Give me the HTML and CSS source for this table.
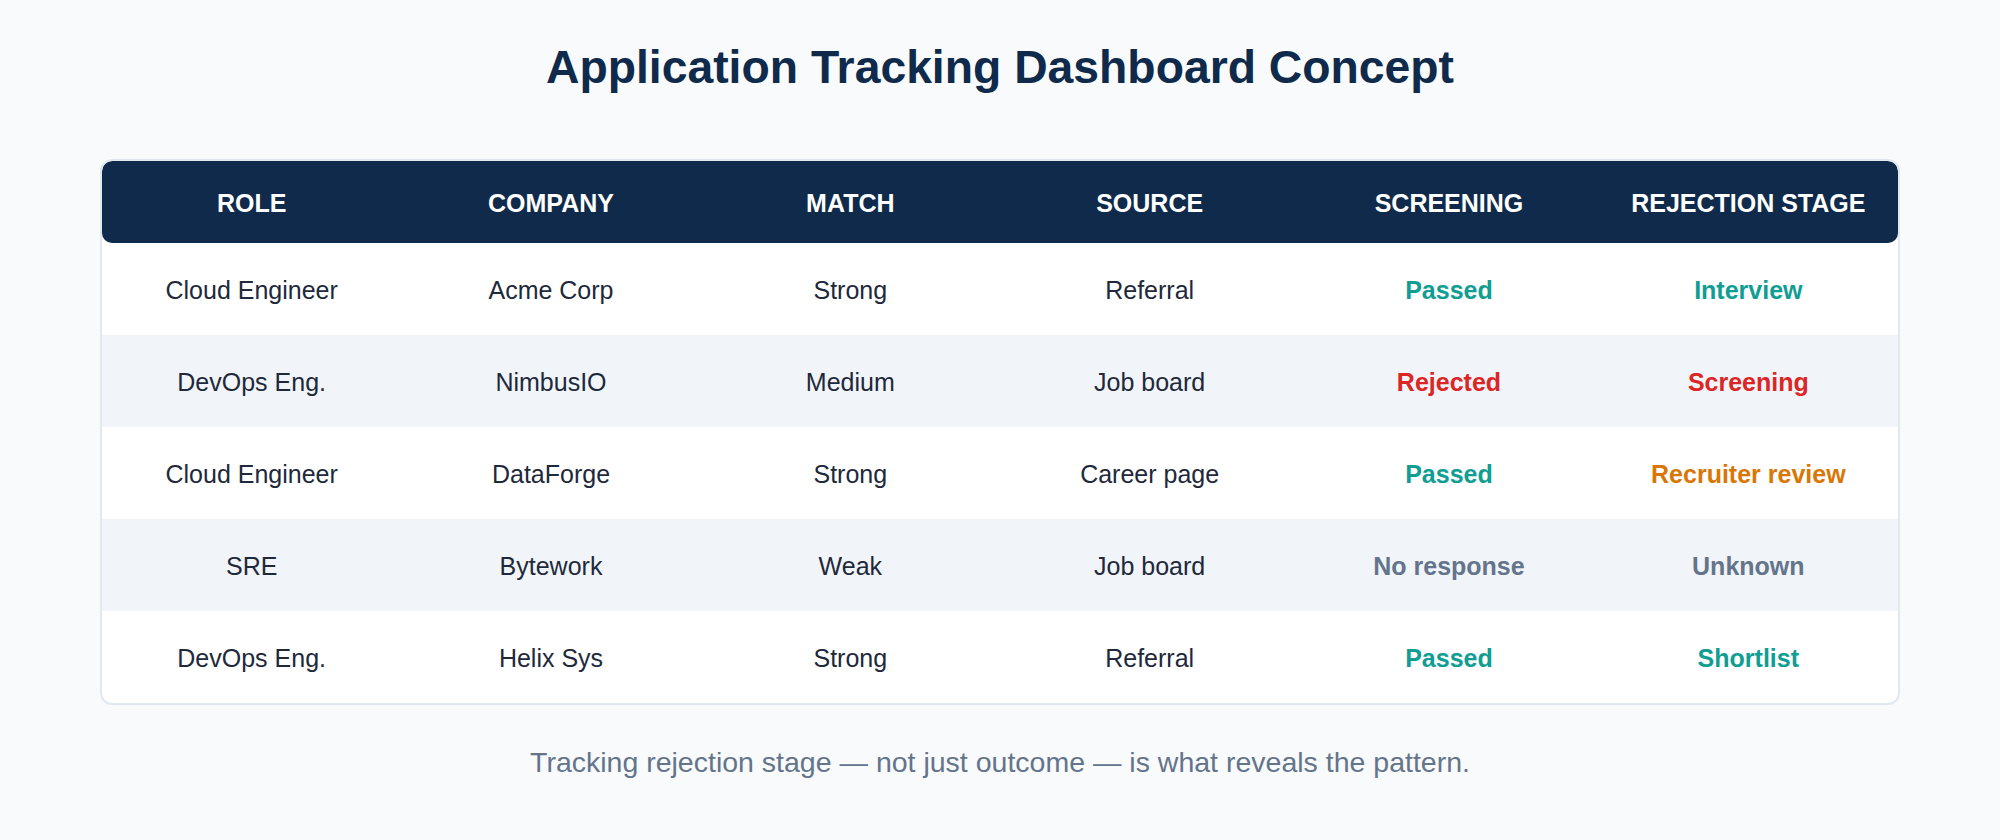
FILE: index.html
```html
<!DOCTYPE html>
<html lang="en">
<head>
<meta charset="utf-8">
<title>Application Tracking Dashboard Concept</title>
<link rel="stylesheet" href="styles.css">
</head>
<body>
<main class="page">
  <h1 class="title">Application Tracking Dashboard Concept</h1>
  <div class="card">
    <table class="tracker">
      <thead>
        <tr>
          <th>ROLE</th>
          <th>COMPANY</th>
          <th>MATCH</th>
          <th>SOURCE</th>
          <th>SCREENING</th>
          <th>REJECTION STAGE</th>
        </tr>
      </thead>
      <tbody>
        <tr>
          <td>Cloud Engineer</td>
          <td>Acme Corp</td>
          <td>Strong</td>
          <td>Referral</td>
          <td class="ok">Passed</td>
          <td class="ok">Interview</td>
        </tr>
        <tr>
          <td>DevOps Eng.</td>
          <td>NimbusIO</td>
          <td>Medium</td>
          <td>Job board</td>
          <td class="bad">Rejected</td>
          <td class="bad">Screening</td>
        </tr>
        <tr>
          <td>Cloud Engineer</td>
          <td>DataForge</td>
          <td>Strong</td>
          <td>Career page</td>
          <td class="ok">Passed</td>
          <td class="warn">Recruiter review</td>
        </tr>
        <tr>
          <td>SRE</td>
          <td>Bytework</td>
          <td>Weak</td>
          <td>Job board</td>
          <td class="muted">No response</td>
          <td class="muted">Unknown</td>
        </tr>
        <tr>
          <td>DevOps Eng.</td>
          <td>Helix Sys</td>
          <td>Strong</td>
          <td>Referral</td>
          <td class="ok">Passed</td>
          <td class="ok">Shortlist</td>
        </tr>
      </tbody>
    </table>
  </div>
  <p class="note">Tracking rejection stage — not just outcome — is what reveals the pattern.</p>
</main>
</body>
</html>
```

FILE: styles.css
```css
* {
  box-sizing: border-box;
}

html, body {
  margin: 0;
  padding: 0;
  background: #f8fafc;
}

body {
  font-family: "Liberation Sans", Arial, sans-serif;
  color: #1e293b;
}

.page {
  padding: 41px 100px 0;
}

.title {
  margin: 0;
  font-size: 46.3px;
  line-height: 53px;
  font-weight: 700;
  color: #0f2a4a;
  text-align: center;
}

.card {
  margin-top: 65px;
  background: #ffffff;
  border: 2px solid #e2e8f0;
  border-radius: 12px;
  overflow: hidden;
}

.tracker {
  width: 100%;
  table-layout: fixed;
  border-collapse: separate;
  border-spacing: 0;
}

.tracker th {
  height: 82px;
  padding: 2px 0 0;
  background: #0f2a4a;
  color: #ffffff;
  font-size: 25px;
  font-weight: 700;
  text-align: center;
  vertical-align: middle;
}

.tracker th:first-child {
  border-radius: 10px 0 0 10px;
}

.tracker th:last-child {
  border-radius: 0 10px 10px 0;
}

.tracker td {
  height: 92px;
  padding: 3px 0 0;
  font-size: 25px;
  text-align: center;
  vertical-align: middle;
  color: #1e293b;
}

.tracker tbody tr:nth-child(even) td {
  background: #f1f5f9;
}

.tracker td.ok {
  color: #0f9d94;
  font-weight: 700;
}

.tracker td.bad {
  color: #dc2626;
  font-weight: 700;
}

.tracker td.warn {
  color: #d97706;
  font-weight: 700;
}

.tracker td.muted {
  color: #64748b;
  font-weight: 700;
}

.note {
  margin: 41px 0 0;
  font-size: 28.5px;
  line-height: 33px;
  color: #64748b;
  text-align: center;
}
```
